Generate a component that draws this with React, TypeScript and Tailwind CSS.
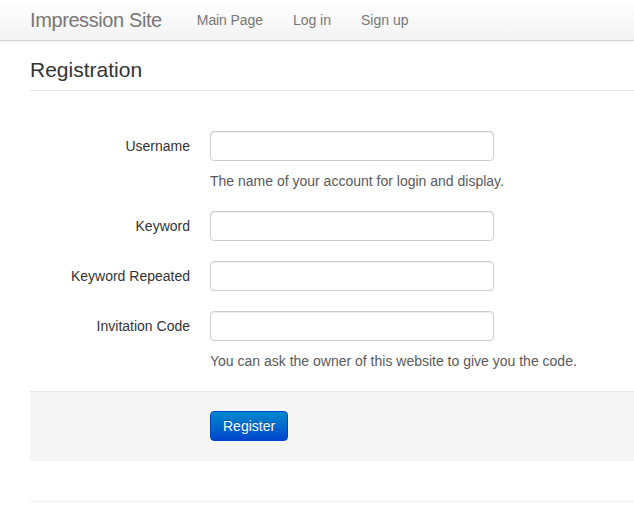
const fields = [
  { label: "Username", help: "The name of your account for login and display." },
  { label: "Keyword" },
  { label: "Keyword Repeated" },
  { label: "Invitation Code", help: "You can ask the owner of this website to give you the code." },
];

export default function App() {
  return (
    <div className="min-h-[506px] w-[634px] overflow-hidden bg-white font-['Liberation_Sans',Arial,sans-serif] text-[14px] leading-[20px] text-[#333]">
      {/* Navbar */}
      <div className="h-[41px] border-b border-[#d4d4d4] bg-gradient-to-b from-white to-[#f2f2f2] shadow-[0_1px_4px_rgba(0,0,0,0.065)]">
        <div className="flex h-[40px] items-center pl-[30px]">
          <span className="text-[20px] font-light tracking-[-0.4px] text-[#777]">Impression Site</span>
          <nav className="ml-[35px] flex gap-[30px] text-[#777]">
            <span className="tracking-[-0.1px]">Main Page</span>
            <span>Log in</span>
            <span>Sign up</span>
          </nav>
        </div>
      </div>

      <div className="ml-[30px] mt-[9px] w-[940px]">
        <h3 className="border-b border-[#e5e5e5] text-[21px] leading-[40px]">Registration</h3>

        <form className="pt-[40px]">
          {fields.map((f) => (
            <div key={f.label} className="mb-[20px] flex">
              <label className="w-[160px] pt-[5px] text-right">{f.label}</label>
              <div className="ml-[20px]">
                <input
                  type="text"
                  className="block h-[30px] w-[284px] rounded-[4px] border border-[#ccc] bg-white px-[6px] shadow-[inset_0_1px_1px_rgba(0,0,0,0.075)]"
                />
                {f.help && <p className="mt-[10px] text-[#595959]">{f.help}</p>}
              </div>
            </div>
          ))}

          <div className="border-t border-[#e5e5e5] bg-[#f5f5f5] pb-[20px] pl-[180px] pt-[19px]">
            <button
              type="button"
              className="h-[30px] rounded-[4px] border border-[#04c] bg-gradient-to-b from-[#08c] to-[#04c] px-[12px] font-medium text-white [text-shadow:0_-1px_0_rgba(0,0,0,0.25)]"
            >
              Register
            </button>
          </div>
        </form>

        <hr className="mt-[40px] border-[#eee]" />
      </div>
    </div>
  );
}
